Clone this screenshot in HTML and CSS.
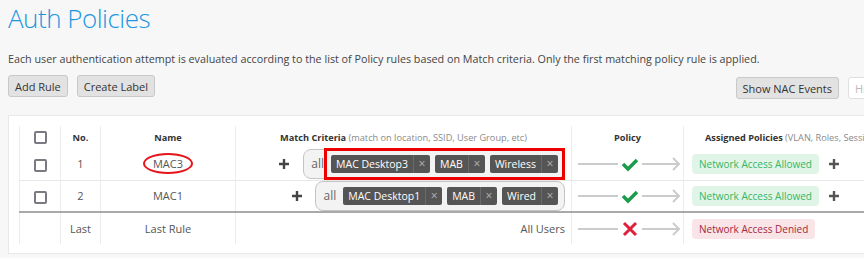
FILE: index.html
```html
<!DOCTYPE html>
<html lang="en">
<head>
    <meta charset="UTF-8">
    <title>Auth Policies</title>
    <link rel="stylesheet" href="styles.css">
</head>
<body>
    <div class="page">
        <h1 class="page-title">Auth Policies</h1>
        <p class="page-desc">Each user authentication attempt is evaluated according to the list of Policy rules based on Match criteria. Only the first matching policy rule is applied.</p>

        <div class="toolbar">
            <div class="toolbar-left">
                <button class="btn">Add Rule</button>
                <button class="btn">Create Label</button>
            </div>
            <div class="toolbar-right">
                <button class="btn">Show NAC Events</button>
                <button class="btn btn-light">Hide Labels</button>
            </div>
        </div>

        <div class="card">
            <table class="rules">
                <colgroup>
                    <col class="col-check">
                    <col class="col-no">
                    <col class="col-name">
                    <col class="col-match">
                    <col class="col-policy">
                    <col class="col-assigned">
                </colgroup>
                <thead>
                    <tr>
                        <th><span class="checkbox"></span></th>
                        <th>No.</th>
                        <th>Name</th>
                        <th>Match Criteria <span class="th-note">(match on location, SSID, User Group, etc)</span></th>
                        <th>Policy</th>
                        <th class="th-left">Assigned Policies <span class="th-note">(VLAN, Roles, Session Timeout, etc)</span></th>
                    </tr>
                </thead>
                <tbody>
                    <tr>
                        <td><span class="checkbox"></span></td>
                        <td>1</td>
                        <td><span class="circled">MAC3</span></td>
                        <td class="match">
                            <span class="plus"><svg width="10" height="10"><path d="M3.8 0h2.4v10H3.8zM0 3.8h10v2.4H0z" fill="#444"/></svg></span>
                            <span class="pill">
                                <span class="pill-all">all</span>
                                <span class="tags marked">
                                    <span class="tag"><span class="tag-text">MAC Desktop3</span><span class="tag-x">×</span></span>
                                    <span class="tag"><span class="tag-text">MAB</span><span class="tag-x">×</span></span>
                                    <span class="tag"><span class="tag-text">Wireless</span><span class="tag-x">×</span></span>
                                </span>
                            </span>
                        </td>
                        <td class="policy">
                            <svg width="104" height="20">
                                <path d="M0 10h40M64 10h37" stroke="#cccccc" stroke-width="2"/>
                                <path d="M95 4l6 6-6 6" stroke="#cccccc" stroke-width="2" fill="none"/>
                                <path d="M45 10l5 5 9-9" stroke="#1a9c4c" stroke-width="3.5" fill="none"/>
                            </svg>
                        </td>
                        <td class="assigned">
                            <span class="badge badge-allow">Network Access Allowed</span>
                            <span class="plus"><svg width="10" height="10"><path d="M3.8 0h2.4v10H3.8zM0 3.8h10v2.4H0z" fill="#555"/></svg></span>
                        </td>
                    </tr>
                    <tr class="row-split">
                        <td><span class="checkbox"></span></td>
                        <td>2</td>
                        <td>MAC1</td>
                        <td class="match">
                            <span class="plus"><svg width="10" height="10"><path d="M3.8 0h2.4v10H3.8zM0 3.8h10v2.4H0z" fill="#444"/></svg></span>
                            <span class="pill">
                                <span class="pill-all">all</span>
                                <span class="tags">
                                    <span class="tag"><span class="tag-text">MAC Desktop1</span><span class="tag-x">×</span></span>
                                    <span class="tag"><span class="tag-text">MAB</span><span class="tag-x">×</span></span>
                                    <span class="tag"><span class="tag-text">Wired</span><span class="tag-x">×</span></span>
                                </span>
                            </span>
                        </td>
                        <td class="policy">
                            <svg width="104" height="20">
                                <path d="M0 10h40M64 10h37" stroke="#cccccc" stroke-width="2"/>
                                <path d="M95 4l6 6-6 6" stroke="#cccccc" stroke-width="2" fill="none"/>
                                <path d="M45 10l5 5 9-9" stroke="#1a9c4c" stroke-width="3.5" fill="none"/>
                            </svg>
                        </td>
                        <td class="assigned">
                            <span class="badge badge-allow">Network Access Allowed</span>
                            <span class="plus"><svg width="10" height="10"><path d="M3.8 0h2.4v10H3.8zM0 3.8h10v2.4H0z" fill="#555"/></svg></span>
                        </td>
                    </tr>
                    <tr>
                        <td></td>
                        <td>Last</td>
                        <td>Last Rule</td>
                        <td class="match">All Users</td>
                        <td class="policy">
                            <svg width="104" height="20">
                                <path d="M0 10h40M64 10h37" stroke="#cccccc" stroke-width="2"/>
                                <path d="M95 4l6 6-6 6" stroke="#cccccc" stroke-width="2" fill="none"/>
                                <path d="M46 4l12 12M58 4l-12 12" stroke="#e0203a" stroke-width="3" fill="none"/>
                            </svg>
                        </td>
                        <td class="assigned">
                            <span class="badge badge-deny">Network Access Denied</span>
                        </td>
                    </tr>
                </tbody>
            </table>
        </div>
    </div>
</body>
</html>
```

FILE: styles.css
```css
* {
    margin: 0;
    padding: 0;
    box-sizing: border-box;
}

body {
    font-family: "Open Sans", "Liberation Sans", Arial, sans-serif;
    background: #f7f7f7;
    color: #444;
    overflow: hidden;
}

.page {
    width: 1000px;
    padding: 0 8px;
}

.page-title {
    font-size: 26px;
    font-weight: 300;
    line-height: 36px;
    letter-spacing: -0.5px;
    color: #1b98e0;
}

.page-desc {
    margin-top: 15px;
    font-size: 10.75px;
    line-height: 16px;
    color: #444;
}

.toolbar {
    display: flex;
    align-items: flex-start;
    width: 930px;
    margin-top: 8px;
}

.toolbar-left,
.toolbar-right {
    display: flex;
    gap: 9px;
}

.toolbar-right {
    margin-left: auto;
    margin-top: 2px;
}

.btn {
    height: 22px;
    padding: 0 6px;
    font-family: inherit;
    font-size: 11px;
    color: #333;
    background: #e2e2e2;
    border: 1px solid #c9c9c9;
    border-radius: 3px;
}

.btn-light {
    width: 90px;
    background: #fff;
    border-color: #e0e0e0;
    color: #bbb;
    text-align: left;
}

.card {
    margin-top: 16px;
    width: 990px;
    background: #fff;
    border: 1px solid #e8e8e8;
    padding: 10px 0 9px 10px;
}

.rules {
    border-collapse: collapse;
    table-layout: fixed;
    width: 960px;
    font-size: 11px;
    color: #555;
}

.col-check { width: 41px; }
.col-no { width: 40px; }
.col-name { width: 135px; }
.col-match { width: 336px; }
.col-policy { width: 112px; }
.col-assigned { width: 296px; }

.rules th,
.rules td {
    border-left: 1px solid #ececec;
    text-align: center;
    vertical-align: middle;
    white-space: nowrap;
    overflow: hidden;
}

.rules th {
    height: 22px;
    font-size: 9.2px;
    font-weight: 700;
    color: #333;
}

.rules th.th-left {
    text-align: left;
    padding-left: 21px;
}

.th-note {
    font-weight: 400;
    color: #8a8a8a;
}

.rules td {
    height: 32px;
    border-bottom: 1px solid #e8e8e8;
}

.rules tbody tr:last-child td {
    border-bottom: none;
}

.rules tr.row-split td {
    border-bottom: 2px solid #a9a9a9;
}

.checkbox {
    display: inline-block;
    width: 13px;
    height: 13px;
    border: 2px solid #7a7a82;
    border-radius: 2px;
    vertical-align: middle;
}

.circled {
    display: inline-block;
    padding: 1px 8px;
    border: 2px solid #e4161c;
    border-radius: 50%;
}

.rules td.match {
    text-align: right;
    padding-right: 6px;
    color: #555;
}

.match > * {
    vertical-align: middle;
}

.plus {
    display: inline-block;
    line-height: 0;
    vertical-align: middle;
}

.match .plus {
    margin-right: 11px;
}

.pill {
    display: inline-flex;
    align-items: center;
    height: 30px;
    padding: 0 6px 0 7px;
    background: #f3f3f3;
    border: 1px solid #c4c4c4;
    border-radius: 8px;
}

.pill-all {
    font-size: 12px;
    color: #666;
    margin-right: 7px;
}

.tags {
    display: inline-flex;
    gap: 5px;
}

.tags.marked {
    outline: 3px solid #ee0000;
    outline-offset: 4px;
}

.tag {
    display: inline-flex;
    height: 18px;
    background: #555;
    border-radius: 2px;
    color: #fff;
    font-size: 10.5px;
    line-height: 18px;
}

.tag-text {
    padding: 0 5px;
}

.tag-x {
    width: 17px;
    text-align: center;
    color: #b5b5b5;
    font-size: 12px;
    border-left: 1px solid #6a6a6a;
}

.rules td.policy {
    text-align: left;
    padding-left: 6px;
    line-height: 0;
}

.rules td.assigned {
    text-align: left;
    padding-left: 8px;
}

.badge {
    display: inline-block;
    height: 20px;
    line-height: 20px;
    padding: 0 7px;
    border-radius: 4px;
    font-size: 10px;
    vertical-align: middle;
}

.badge-allow {
    background: #e0f5e7;
    color: #36b565;
}

.badge-deny {
    background: #f9e4e7;
    color: #a3283d;
}

.assigned .plus {
    margin-left: 7px;
}
```
